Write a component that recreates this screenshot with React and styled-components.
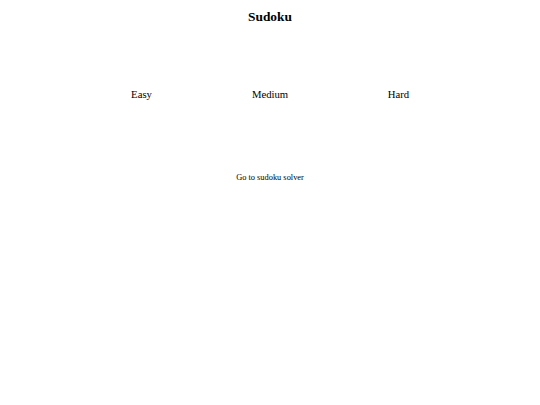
import React from "react";
import styled, { createGlobalStyle } from "styled-components";

const Global = createGlobalStyle`
  html, body { margin: 0; padding: 0; background: #fff; }
  body { font-family: "Liberation Serif", "Times New Roman", serif; color: #000; }
`;

const Page = styled.div`
  display: flex;
  flex-direction: column;
  align-items: center;
  width: 540px;
`;

const Title = styled.h1`
  margin: 9px 0 0;
  font-size: 13.4px;
  line-height: 15px;
  font-weight: bold;
`;

const Levels = styled.div`
  display: grid;
  grid-template-columns: repeat(3, 128.5px);
  margin-top: 64px;
`;

const Level = styled.div`
  text-align: center;
  font-size: 10.7px;
  line-height: 12px;
  cursor: pointer;
`;

const SolverLink = styled.div`
  margin-top: 73px;
  font-size: 8.4px;
  line-height: 10px;
  cursor: pointer;
`;

export default function App() {
  return (
    <>
      <Global />
      <Page>
        <Title>Sudoku</Title>
        <Levels>
          {["Easy", "Medium", "Hard"].map((l) => (
            <Level key={l}>{l}</Level>
          ))}
        </Levels>
        <SolverLink>Go to sudoku solver</SolverLink>
      </Page>
    </>
  );
}
